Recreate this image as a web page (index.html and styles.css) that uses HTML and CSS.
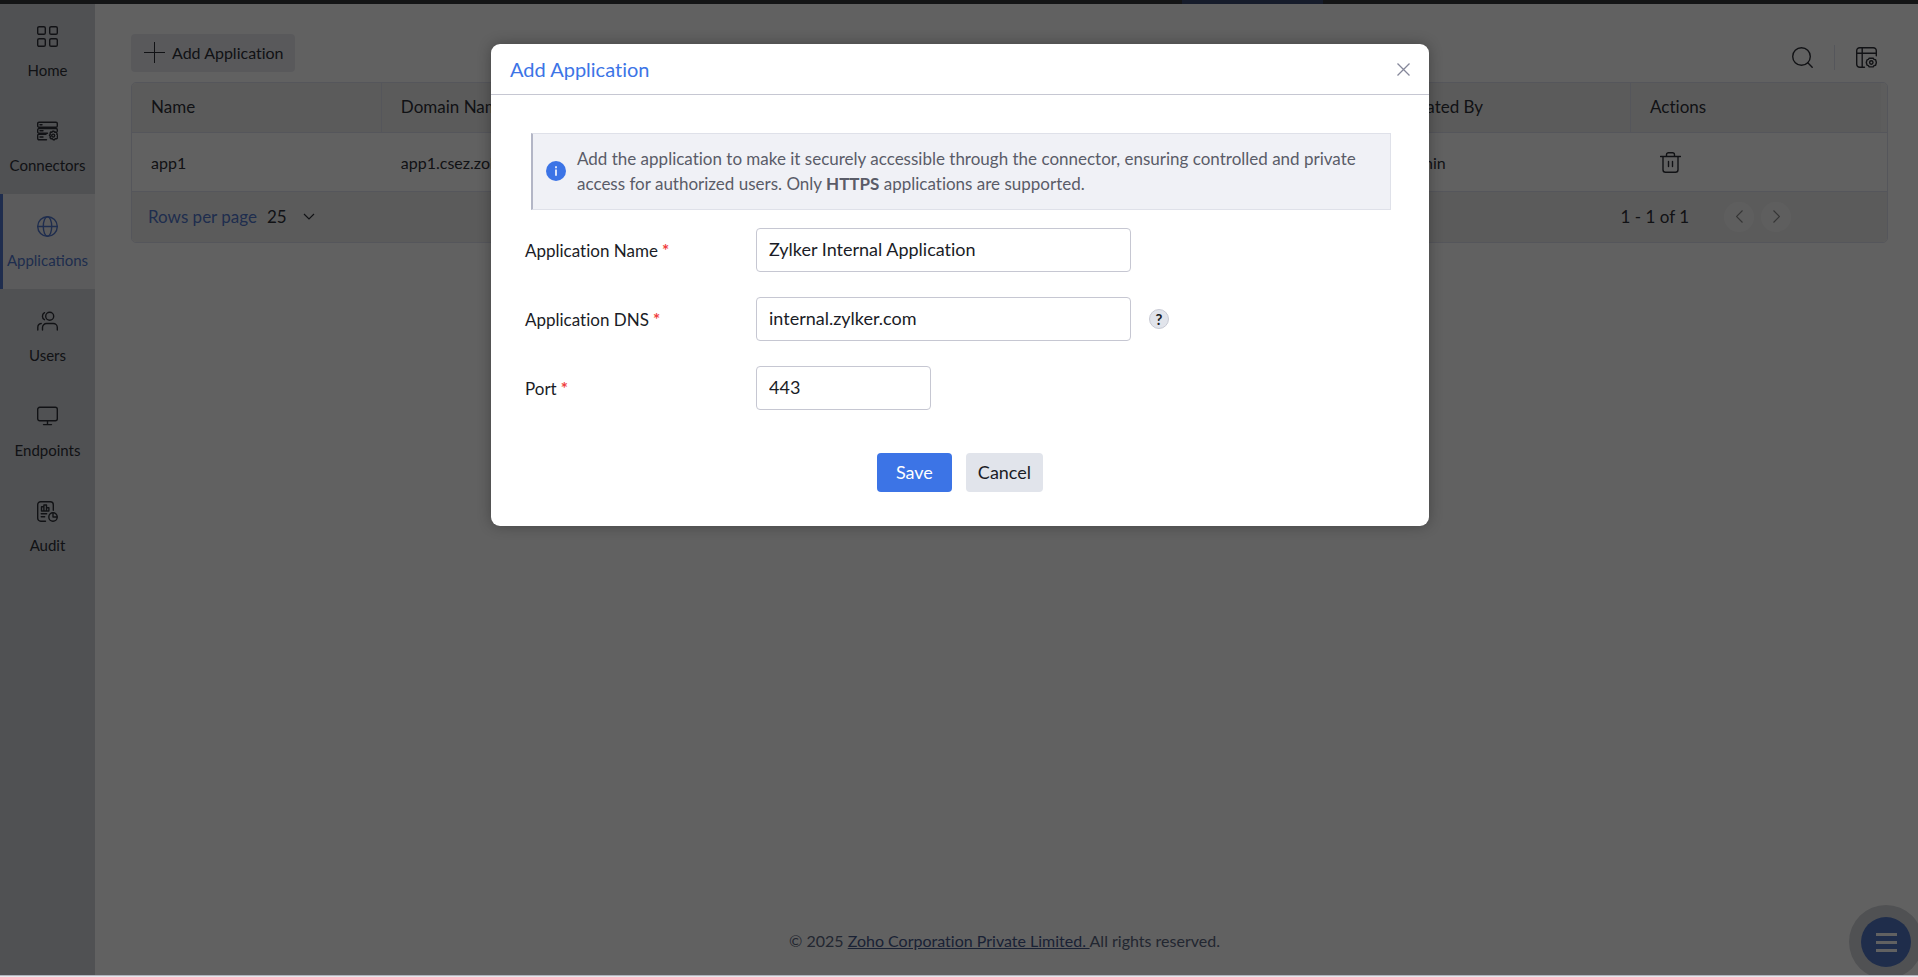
FILE: index.html
```html
<!DOCTYPE html>
<html lang="en">
<head>
<meta charset="utf-8">
<title>Applications</title>
<link rel="stylesheet" href="styles.css">
</head>
<body>
<div class="app">
  <div class="topbar"><span class="topbar-active"></span></div>
  <div class="shell">
    <nav class="sidebar">
      <a class="nav-item" href="#home">
        <svg class="icon" viewBox="0 0 21 21"><rect x="0.7" y="0.7" width="7.6" height="7.6" rx="1.4"/><rect x="12.7" y="0.7" width="7.6" height="7.6" rx="1.4"/><rect x="0.7" y="12.7" width="7.6" height="7.6" rx="1.4"/><rect x="12.7" y="12.7" width="7.6" height="7.6" rx="1.4"/></svg>
        <span>Home</span>
      </a>
      <a class="nav-item" href="#connectors">
        <svg class="icon" viewBox="0 0 21 21"><rect x="0.7" y="1.2" width="19.6" height="5" rx="1.3"/><path d="M3 3.7h2M9.500 18.800H2a1.300 1.300 0 0 1-1.300-1.300v-3a1.300 1.300 0 0 1 1.300-1.300h7M20.300 10.300V8.800a1.300 1.300 0 0 0-1.300-1.300H2A1.300 1.300 0 0 0 .7 8.800v2A1.300 1.300 0 0 0 2 12.200h8.500M3 9.800h3M3 16h3"/><path d="M13.600 11l1.200.2.900-1h1.200l.9 1 1.300-.2.9 1.100-.2 1.200 1 1-.5 1.200.3 1.300-1 .9-1.300-.1-.9 1.100h-1.300l-.8-1.100-1.300.1-.9-1 .3-1.200-.9-1.200.8-1-.2-1.300z"/><circle cx="16.200" cy="14.600" r="1.500"/></svg>
        <span>Connectors</span>
      </a>
      <a class="nav-item nav-item-active" href="#applications" aria-current="page">
        <svg class="icon" viewBox="0 0 21 21"><circle cx="10.5" cy="10.500" r="9.800"/><ellipse cx="10.500" cy="10.500" rx="4.200" ry="9.800"/><path d="M.7 10.500h19.600"/></svg>
        <span>Applications</span>
      </a>
      <a class="nav-item" href="#users">
        <svg class="icon" viewBox="0 0 21 21"><circle cx="12.700" cy="5.200" r="4"/><path d="M7.500 1.700a4 4 0 0 0 0 7M5.500 19v-2.500a4 4 0 0 1 4-4h6.800a4 4 0 0 1 4 4V19M.8 19v-2.500a4 4 0 0 1 3.400-4"/></svg>
        <span>Users</span>
      </a>
      <a class="nav-item" href="#endpoints">
        <svg class="icon" viewBox="0 0 21 21"><rect x=".7" y="1.300" width="19.600" height="13.500" rx="2"/><path d="M10.500 14.800v3.600M6.500 18.600h8"/></svg>
        <span>Endpoints</span>
      </a>
      <a class="nav-item" href="#audit">
        <svg class="icon" viewBox="0 0 21 21"><path d="M8.500 20.200H3.700a3 3 0 0 1-3-3V3.700a3 3 0 0 1 3-3h9.600a3 3 0 0 1 3 3v5.500M4.500 10V5.700h2.400V10zM6.900 10V4h2.600v6zM9.500 10V6.800h2.400V10zM4.200 12.800h5.500M4.200 15.800h3.500"/><circle cx="16" cy="16" r="4.200"/><path d="M16 12v4h4"/></svg>
        <span>Audit</span>
      </a>
    </nav>
    <main class="content">
      <div class="toolbar">
        <button class="add-button" type="button">
          <svg class="icon icon-thin" viewBox="0 0 21 21"><path d="M10.500 0v21M0 10.500h21"/></svg>
          Add Application
        </button>
        <div class="tools">
          <button class="tool" type="button" aria-label="Search"><svg class="icon" viewBox="0 0 21 21"><circle cx="9.500" cy="9.500" r="8.800"/><path d="M15.800 15.800l4.400 4.400"/></svg></button>
          <span class="tool-divider"></span>
          <button class="tool" type="button" aria-label="Manage columns"><svg class="icon" viewBox="0 0 21 21"><path d="M8.500 20.300H3.700a3 3 0 0 1-3-3V3.700a3 3 0 0 1 3-3h13.600a3 3 0 0 1 3 3v5M.7 6.200h19.600M6.200.7v19.600"/><path d="M13.200 11.200h4l.8 1.200 1.600.4.800 2.700-.8 2.700-1.600.4-.8 1.300h-4l-.8-1.300-1.300-.4-.8-2.700.8-2.700 1.300-.4z"/><circle cx="15.300" cy="15.500" r="1.700"/></svg></button>
        </div>
      </div>
      <div class="grid">
        <table class="table">
          <colgroup><col span="7"><col class="col-gutter"></colgroup>
          <thead><tr><th>Name</th><th>Domain Name</th><th></th><th></th><th></th><th>Created By</th><th>Actions</th><th class="gutter"></th></tr></thead>
          <tbody><tr><td>app1</td><td>app1.csez.zoho</td><td></td><td></td><td></td><td>Admin</td>
            <td><button class="delete" type="button" aria-label="Delete app1"><svg class="icon" viewBox="0 0 21 21"><path d="M.5 4.500h20M3 4.500v13.300a2.500 2.500 0 0 0 2.500 2.500h10a2.500 2.500 0 0 0 2.500-2.500V4.500M6.500 4.500V2.700a2 2 0 0 1 2-2h4a2 2 0 0 1 2 2v1.800M8.500 9.500v5M12.500 9.500v5"/></svg></button></td><td></td></tr></tbody>
        </table>
        <div class="pager">
          <label class="pager-label" for="rows">Rows per page</label>
          <span class="rows-wrap">
            <select class="rows" id="rows"><option>25</option></select>
            <svg class="chevron" viewBox="0 0 12 7"><path d="M1 1l5 5 5-5"/></svg>
          </span>
          <span class="range">1 - 1 of 1</span>
          <div class="pages">
            <button class="page" type="button" aria-label="Previous page" disabled><svg class="arrow" viewBox="0 0 7 13"><path d="M6.500.5l-6 6 6 6"/></svg></button>
            <button class="page" type="button" aria-label="Next page" disabled><svg class="arrow" viewBox="0 0 7 13"><path d="M.5.5l6 6-6 6"/></svg></button>
          </div>
        </div>
      </div>
      <footer class="footer">© 2025 <a class="footer-link" href="#zoho">Zoho Corporation Private Limited. </a>All rights reserved.</footer>
    </main>
  </div>
  <button class="fab" type="button" aria-label="Menu"><span class="fab-core"><svg class="fab-icon" viewBox="0 0 21 19"><path d="M0 1.500h21M0 9.500h21M0 17.500h21"/></svg></span></button>
  <div class="overlay">
    <section class="modal" role="dialog" aria-labelledby="modal-title">
      <header class="modal-header">
        <h1 class="modal-title" id="modal-title">Add Application</h1>
        <button class="close" type="button" aria-label="Close"><svg class="close-icon" viewBox="0 0 13 13"><path d="M.5.5l12 12M12.500.5l-12 12"/></svg></button>
      </header>
      <form class="form">
        <div class="info">
          <span class="info-icon"><svg viewBox="0 0 20 20"><circle cx="10" cy="10" r="10" fill="#3c74e6"/><path d="M9 5.300h2v2H9zM9 8.600h2v6.200H9z" fill="#d9e3fa"/></svg></span>
          <p class="info-text">Add the application to make it securely accessible through the connector, ensuring controlled and private access for authorized users. Only <strong>HTTPS</strong> applications are supported.</p>
        </div>
        <div class="field"><label class="label" for="name">Application Name<span class="req">*</span></label><input class="input" id="name" type="text" value="Zylker Internal Application"></div>
        <div class="field"><label class="label" for="dns">Application DNS<span class="req">*</span></label><input class="input" id="dns" type="text" value="internal.zylker.com"><button class="help" type="button" aria-label="Help">?</button></div>
        <div class="field"><label class="label" for="port">Port<span class="req">*</span></label><input class="input input-short" id="port" type="text" value="443"></div>
        <div class="actions"><button class="btn btn-primary" type="button">Save</button><button class="btn" type="button">Cancel</button></div>
      </form>
    </section>
  </div>
</div>
<div class="bottom-edge"></div>
</body>
</html>
```
FILE: styles.css
```css
* { box-sizing: border-box; }
body {
  margin: 0;
  min-height: 100vh;
  display: flex;
  flex-direction: column;
  font-family: Lato, "Noto Sans", sans-serif;
  font-size: 17px;
  font-variant-ligatures: none;
  color: #2f3138;
}
button, input, select { font: inherit; font-variant-ligatures: none; color: inherit; }
button { border: 0; background: none; padding: 0; cursor: pointer; }
.app {
  flex: 1;
  position: relative;
  display: flex;
  flex-direction: column;
  overflow: hidden;
  background: #ffffff;
}
.bottom-edge { height: 2px; background: #e6e7ec; border-top: 1px solid #b4b5bf; }
.topbar { height: 4px; background: #36373c; padding-left: 1182px; }
.topbar-active { display: block; width: 141px; height: 4px; background: #3b4a72; }
.shell { flex: 1; display: flex; }
.sidebar { width: 95px; background: #d2d5da; font-variant-ligatures: normal; }
.nav-item {
  height: 95px;
  padding-top: 22px;
  display: flex;
  flex-direction: column;
  align-items: center;
  gap: 13px;
  font-size: 15px;
  line-height: 20px;
  color: inherit;
  text-decoration: none;
}
.nav-item-active { background: #f0f0f1; box-shadow: inset 3px 0 #5277cc; color: #5277cc; }
.icon {
  display: block;
  width: 21px;
  height: 21px;
  fill: none;
  stroke: currentColor;
  stroke-width: 1.4;
  stroke-linecap: round;
  stroke-linejoin: round;
}
.icon-thin { stroke-width: 1; }
.content { flex: 1; min-width: 0; display: flex; flex-direction: column; padding: 30px 30px 24px 36px; }
.toolbar { display: flex; justify-content: space-between; align-items: flex-start; height: 48px; }
.add-button {
  height: 38px;
  padding: 0 11px 2px 13px;
  display: flex;
  align-items: center;
  gap: 7px;
  border-radius: 4px;
  background: #eaebf0;
  font-size: 16px;
}
.tools { display: flex; align-items: center; gap: 21px; padding: 11px 11px 0 0; }
.tool-divider { width: 1px; height: 25px; background: #dfe2ee; }
.grid { border: 1px solid #dfe2ee; border-radius: 5px; overflow: hidden; }
.table { width: 100%; table-layout: fixed; border-collapse: separate; border-spacing: 0; }
.col-gutter { width: 6px; }
.table th, .table td { padding: 0 0 0 19px; text-align: left; font-weight: 400; border-bottom: 1px solid #dfe2ee; white-space: nowrap; }
.table th { height: 50px; padding-bottom: 3px; background: #f0f0f0; border-right: 1px solid #dfe2ee; }
.table th:nth-child(7), .table .gutter { border-right: 0; }
.table .gutter { padding: 0; background: #f5f5f5; }
.table td { height: 59px; font-size: 16px; }
.delete { margin-left: 10px; display: block; }
.pager { height: 50px; padding: 0 96px 1px 16px; display: flex; align-items: center; background: #f0f0f0; }
.pager-label { color: #5277cc; }
.rows-wrap { position: relative; margin-left: 10px; }
.rows { appearance: none; border: 0; background: none; width: 48px; padding: 0; display: block; }
.chevron, .arrow { fill: none; stroke: currentColor; stroke-width: 1.2; }
.chevron { position: absolute; right: 0; top: 7px; width: 12px; height: 7px; pointer-events: none; }
.range { margin-left: auto; }
.pages { display: flex; gap: 7px; margin-left: 35px; }
.page { width: 30px; height: 30px; border-radius: 15px; background: #f8f8f8; color: #8b8b8b; display: flex; align-items: center; justify-content: center; }
.arrow { width: 7px; height: 13px; }
.footer { margin: auto 10px 0 0; text-align: center; font-size: 16px; line-height: 20px; color: #5b6680; }
.footer-link { color: #46598c; white-space: pre; }
.fab {
  position: absolute;
  right: -5px;
  bottom: -4px;
  width: 74px;
  height: 74px;
  border-radius: 37px;
  background: #d2d5da;
  display: flex;
  align-items: center;
  justify-content: center;
}
.fab-core { width: 50px; height: 50px; border-radius: 25px; background: #5277c6; display: flex; align-items: center; justify-content: center; }
.fab-icon { width: 21px; height: 19px; stroke: #ffffff; stroke-width: 3; }
.overlay {
  position: absolute;
  inset: 0;
  padding: 44px 0 0 2px;
  display: flex;
  justify-content: center;
  align-items: flex-start;
  background: rgba(0, 0, 0, 0.62);
}
.modal {
  width: 938px;
  border-radius: 9px;
  background: #ffffff;
  color: #1a1c26;
  box-shadow: 0 0 14px rgba(0, 0, 0, 0.3);
}
.modal-header { height: 51px; padding: 0 19px; display: flex; align-items: center; justify-content: space-between; border-bottom: 1px solid #c6c7d2; }
.modal-title { margin: 0; font-size: 20px; line-height: 24px; font-weight: 400; color: #3c74e6; }
.close-icon { display: block; width: 13px; height: 13px; stroke: #85879a; stroke-width: 1.3; fill: none; }
.form { padding: 38px 34px 34px; }
.info {
  margin: 0 4px 18px 6px;
  padding: 12px 10px 13px 13px;
  display: flex;
  align-items: center;
  gap: 11px;
  background: #f0f1f6;
  border: 1px solid #dfe1e9;
  border-left: 2px solid #b3b6c6;
  color: #5a5c68;
}
.info-icon { flex: none; width: 20px; height: 20px; }
.info-icon svg { display: block; }
.info-text { margin: 0; line-height: 25px; }
.field { display: flex; align-items: center; margin-bottom: 25px; }
.label { width: 231px; }
.req { color: #f03e3e; margin-left: 4px; font-weight: 700; }
.input { width: 375px; height: 44px; padding: 0 12px 2px; border: 1px solid #c6c7d2; border-radius: 4px; background: #ffffff; }
.input-short { width: 175px; }
.help { width: 20px; height: 20px; margin-left: 18px; border-radius: 10px; border: 1px solid #c8cad4; background: #e1e4eb; font-size: 15px; line-height: 18px; font-weight: 700; }
.input, .btn { font-size: 18px; }
.actions { display: flex; justify-content: center; gap: 14px; padding-top: 18px; }
.btn { height: 39px; padding: 0 12px 1px; border-radius: 4px; background: #e1e4eb; }
.btn-primary { padding: 0 19px 1px; background: #3c74e6; color: #ffffff; }
```
